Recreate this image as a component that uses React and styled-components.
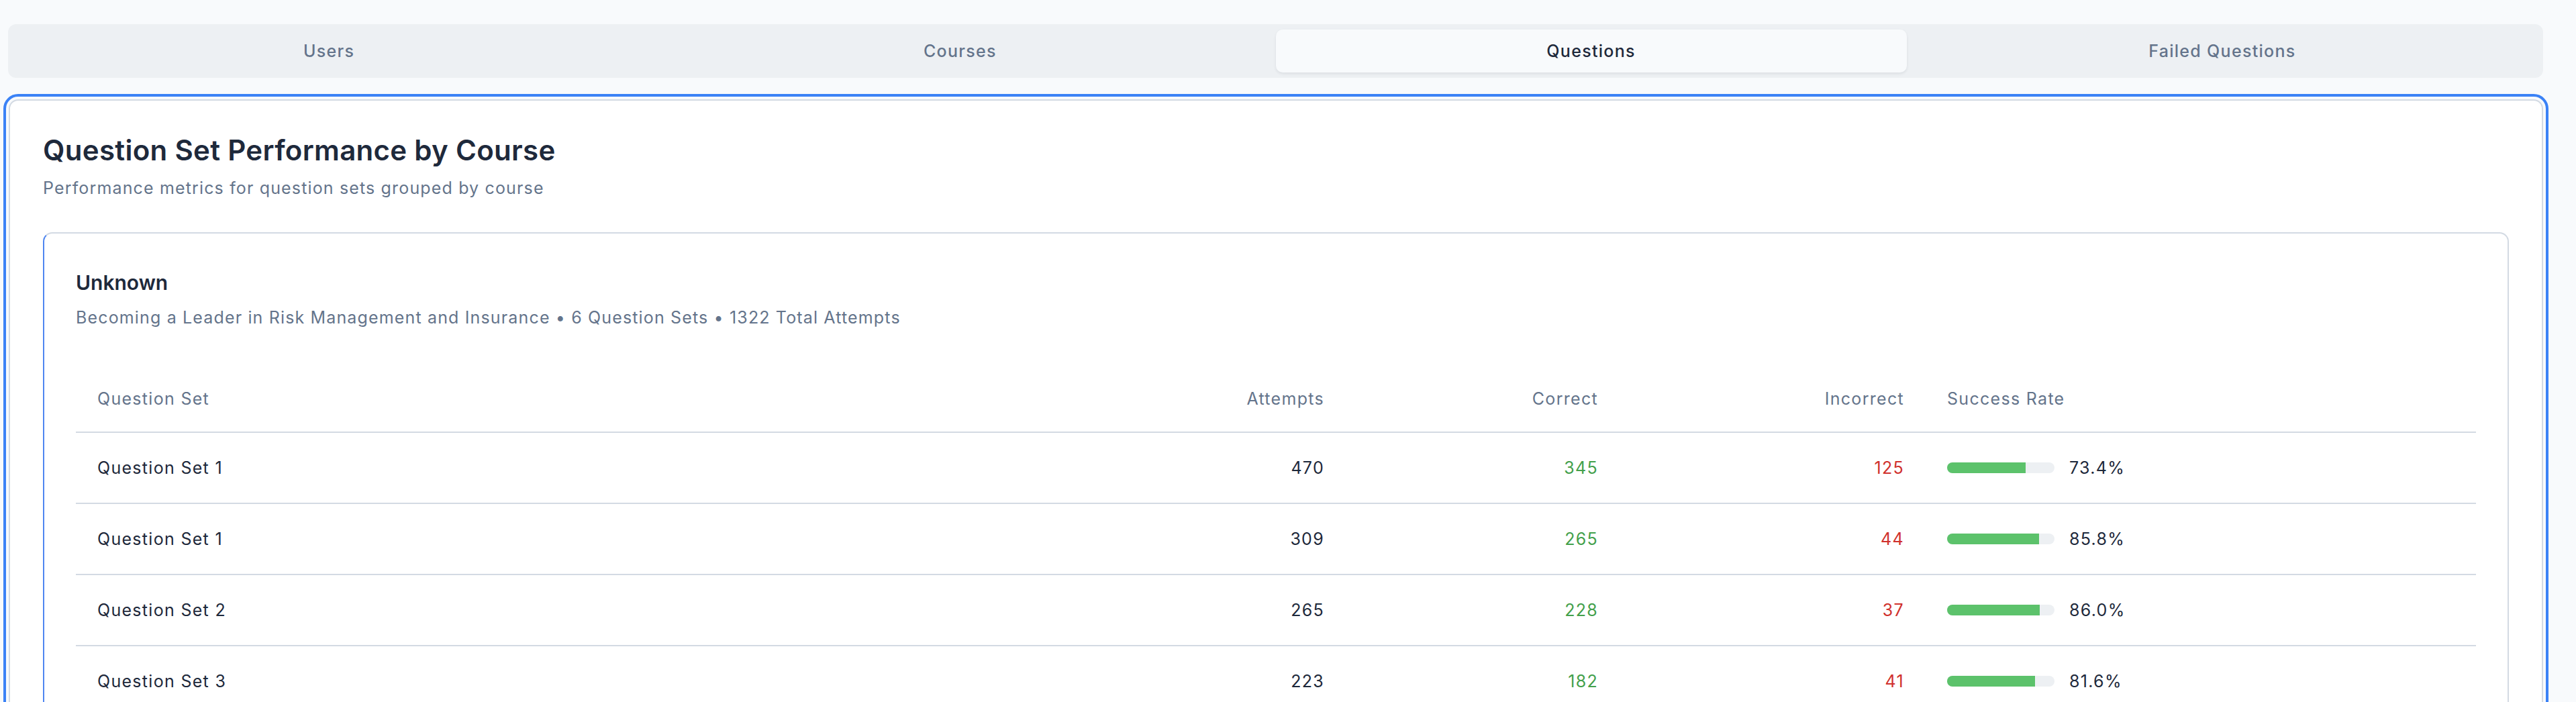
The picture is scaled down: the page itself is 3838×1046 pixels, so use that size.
import React from "react";
import styled, { createGlobalStyle } from "styled-components";

const rows = [
  { name: "Question Set 1", attempts: 470, correct: 345, incorrect: 125 },
  { name: "Question Set 1", attempts: 309, correct: 265, incorrect: 44 },
  { name: "Question Set 2", attempts: 265, correct: 228, incorrect: 37 },
  { name: "Question Set 3", attempts: 223, correct: 182, incorrect: 41 },
];

const tabs = ["Users", "Courses", "Questions", "Failed Questions"];

const App = () => {
  return (
    <>
      <GlobalStyle />
      <Page>
        <TabList>
          {tabs.map((t) => (
            <Tab key={t} $active={t === "Questions"}>
              {t}
            </Tab>
          ))}
        </TabList>
        <Card>
          <Title>Question Set Performance by Course</Title>
          <Subtitle>Performance metrics for question sets grouped by course</Subtitle>
          <CourseCard>
            <CourseName>Unknown</CourseName>
            <CourseMeta>
              Becoming a Leader in Risk Management and Insurance • 6 Question Sets • 1322 Total Attempts
            </CourseMeta>
            <Table>
              <HeadRow>
                <HeadCell>Question Set</HeadCell>
                <HeadCell $right>Attempts</HeadCell>
                <HeadCell $right>Correct</HeadCell>
                <HeadCell $right>Incorrect</HeadCell>
                <HeadCell>Success Rate</HeadCell>
              </HeadRow>
              {rows.map((r, i) => {
                const rate = (r.correct / r.attempts) * 100;
                return (
                  <Row key={i}>
                    <Cell>{r.name}</Cell>
                    <Cell $right>{r.attempts}</Cell>
                    <Cell $right $tone="good">{r.correct}</Cell>
                    <Cell $right $tone="bad">{r.incorrect}</Cell>
                    <Cell>
                      <RateWrap>
                        <Track>
                          <Fill style={{ width: `${rate}%` }} />
                        </Track>
                        <span>{rate.toFixed(1)}%</span>
                      </RateWrap>
                    </Cell>
                  </Row>
                );
              })}
            </Table>
          </CourseCard>
        </Card>
      </Page>
    </>
  );
};
export default App;

//styled-components

const GlobalStyle = createGlobalStyle`
  html, body {
    margin: 0;
    padding: 0;
    background: #f8fafc;
    font-family: Inter, "Noto Sans", sans-serif;
    color: #1e293b;
  }
`;

const Page = styled.div`
  padding: 36px 49px 0 12px;
  min-height: 1046px;
  box-sizing: border-box;
`;

const TabList = styled.div`
  display: grid;
  grid-template-columns: repeat(4, 1fr);
  height: 80px;
  box-sizing: border-box;
  padding: 8px;
  background: #edf0f3;
  border-radius: 12px;
`;

const Tab = styled.div`
  display: flex;
  align-items: center;
  justify-content: center;
  border-radius: 10px;
  font-size: 25px;
  letter-spacing: 1.3px;
  font-weight: 500;
  color: ${(p) => (p.$active ? "#1e293b" : "#64748b")};
  background: ${(p) => (p.$active ? "#f8fafc" : "transparent")};
  box-shadow: ${(p) => (p.$active ? "0 2px 4px rgba(15, 23, 42, 0.08)" : "none")};
`;

const Card = styled.div`
  margin-top: 32px;
  margin-left: 1px;
  background: #fff;
  border: 2px solid #d3dae3;
  border-radius: 14px;
  outline: 4px solid #3b82f6;
  outline-offset: 4px;
  padding: 49px;
`;

const Title = styled.h2`
  margin: 0;
  font-size: 42px;
  line-height: 50px;
  font-weight: 600;
  letter-spacing: 0.3px;
  color: #1e293b;
`;

const Subtitle = styled.p`
  margin: 14px 0 0;
  font-size: 25px;
  letter-spacing: 1.15px;
  line-height: 35px;
  color: #64748b;
`;

const CourseCard = styled.div`
  margin-top: 48px;
  border: 2px solid #d3dae3;
  border-left-color: #4f86f0;
  border-radius: 14px;
  padding: 49px 47px 47px;
`;

const CourseName = styled.h3`
  margin: 0;
  font-size: 30px;
  line-height: 49px;
  font-weight: 600;
  color: #1e293b;
`;

const CourseMeta = styled.p`
  margin: 10px 0 0;
  font-size: 25px;
  letter-spacing: 1.15px;
  line-height: 35px;
  color: #64748b;
`;

const Table = styled.div`
  margin-top: 53px;
`;

const HeadRow = styled.div`
  display: grid;
  grid-template-columns: 1fr 408px 408px 456px 820px;
  border-bottom: 2px solid #d3dae3;
`;

const Row = styled(HeadRow)``;

const HeadCell = styled.div`
  padding: 33px 32px 31px;
  font-size: 25px;
  letter-spacing: 1.3px;
  line-height: 35px;
  font-weight: 400;
  color: #64748b;
  text-align: ${(p) => (p.$right ? "right" : "left")};
`;

const Cell = styled.div`
  padding: 34.5px 32px;
  font-size: 25px;
  letter-spacing: 1.3px;
  line-height: 35px;
  text-align: ${(p) => (p.$right ? "right" : "left")};
  color: ${(p) =>
    p.$tone === "good" ? "#43a04b" : p.$tone === "bad" ? "#d0312d" : "#1e293b"};
`;

const RateWrap = styled.div`
  display: flex;
  align-items: center;
  gap: 22px;
`;

const Track = styled.div`
  width: 160px;
  height: 16px;
  border-radius: 8px;
  background: #edf0f3;
  overflow: hidden;
  flex-shrink: 0;
`;

const Fill = styled.div`
  height: 100%;
  background: #5cc26b;
`;
